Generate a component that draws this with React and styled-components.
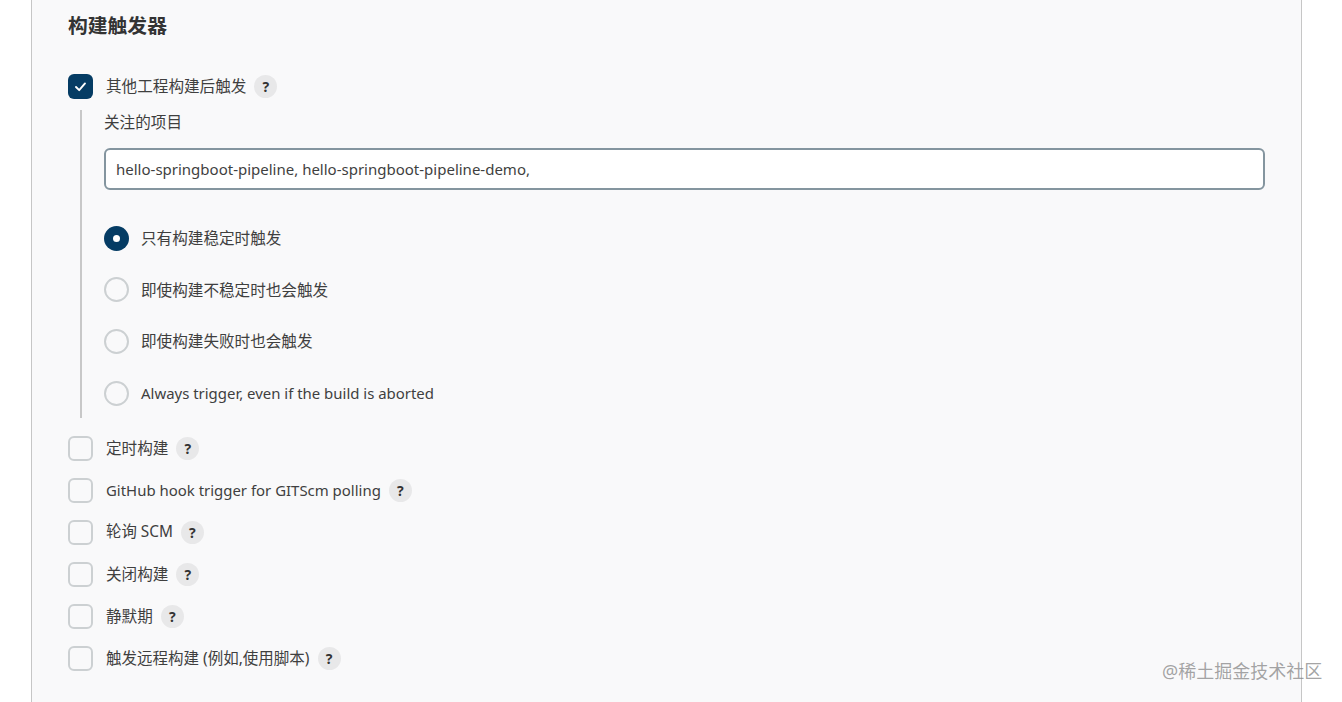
import React from "react";
import styled, { createGlobalStyle } from "styled-components";

const Global = createGlobalStyle`
  html, body { margin: 0; padding: 0; background: #fff; height: 702px; overflow: hidden; }
  body { font-family: "Noto Sans", "Noto Sans CJK SC", sans-serif; color: #333; }
`;

const Page = styled.div`
  height: 702px;
  padding: 0 40px 0 31px;
  box-sizing: border-box;
  position: relative;
  overflow: hidden;
`;

const Panel = styled.section`
  height: 702px;
  box-sizing: border-box;
  background: #f9f9fa;
  border-left: 1px solid #c6c6c6;
  border-right: 1px solid #c6c6c6;
  padding: 11px 36px 0 36px;
`;

const Title = styled.h2`
  margin: 0 0 24px;
  font-size: 19.8px;
  line-height: 30px;
  font-weight: 700;
  color: #333;
`;

const CheckRow = styled.div`
  display: flex;
  align-items: center;
  height: 42px;
`;

const Box = styled.span`
  width: 25px;
  height: 25px;
  box-sizing: border-box;
  flex: none;
  border-radius: 6px;
  display: flex;
  align-items: center;
  justify-content: center;
  background: ${(p) => (p.$on ? "#053c64" : "transparent")};
  border: ${(p) => (p.$on ? "none" : "2px solid #ccd0d2")};
`;

const Label = styled.span`
  margin-left: ${(p) => p.$gap || 13}px;
  font-size: ${(p) => p.$size || 15.6}px;
  line-height: 22px;
  color: #3f3f3f;
  white-space: nowrap;
`;

const Help = styled.span`
  margin-left: 8px;
  width: 23px;
  height: 23px;
  border-radius: 50%;
  background: #e8e8e9;
  color: #333;
  font-size: 14px;
  font-weight: 700;
  display: flex;
  align-items: center;
  justify-content: center;
  flex: none;
`;

const Nested = styled.div`
  margin: 3px 0 9px 12px;
  border-left: 2px solid #c8c8c8;
  padding-left: 22px;
  height: 308px;
  box-sizing: border-box;
`;

const FieldLabel = styled.div`
  font-size: 15.6px;
  line-height: 22px;
  color: #3f3f3f;
  margin-bottom: 15px;
  padding-top: 1px;
`;

const Input = styled.input`
  display: block;
  width: 1161px;
  height: 42px;
  box-sizing: border-box;
  border: 2px solid #84959f;
  border-radius: 6px;
  background: #fff;
  padding: 0 10px;
  font: 15px "Noto Sans", "Noto Sans CJK SC", sans-serif;
  color: #3f3f3f;
  outline: none;
`;

const RadioGroup = styled.div`
  display: flex;
  flex-direction: column;
  margin-top: 22.5px;
`;

const RadioRow = styled.div`
  display: flex;
  align-items: center;
  height: 51.6px;
`;

const Radio = styled.span`
  width: 25px;
  height: 25px;
  box-sizing: border-box;
  border-radius: 50%;
  flex: none;
  display: flex;
  align-items: center;
  justify-content: center;
  background: ${(p) => (p.$on ? "#053c64" : "transparent")};
  border: ${(p) => (p.$on ? "none" : "2px solid #ccd0d2")};
  &::after {
    content: "";
    display: ${(p) => (p.$on ? "block" : "none")};
    width: 7px;
    height: 7px;
    border-radius: 50%;
    background: #fff;
  }
`;

const Watermark = styled.div`
  position: absolute;
  left: 1162px;
  top: 659px;
  font-size: 18px;
  line-height: 24px;
  white-space: nowrap;
  color: rgba(125, 125, 125, 0.7);
`;

const Check = () => (
  <svg width="13" height="13" viewBox="0 0 13 13" fill="none">
    <path d="M2 7l3.2 3.2L11 3.4" stroke="#fff" strokeWidth="1.9" strokeLinecap="round" strokeLinejoin="round" />
  </svg>
);

const items = [
  { t: "定时构建" },
  { t: "GitHub hook trigger for GITScm polling", s: 14.95 },
  { t: "轮询 SCM", s: 15.4 },
  { t: "关闭构建" },
  { t: "静默期" },
  { t: "触发远程构建 (例如,使用脚本)", s: 15.5 },
];
const radios = [
  { t: "只有构建稳定时触发" },
  { t: "即使构建不稳定时也会触发" },
  { t: "即使构建失败时也会触发" },
  { t: "Always trigger, even if the build is aborted", s: 14.95 },
];

export default function App() {
  return (
    <Page>
      <Global />
      <Panel>
        <Title>构建触发器</Title>
        <CheckRow>
          <Box $on><Check /></Box>
          <Label>其他工程构建后触发</Label>
          <Help>?</Help>
        </CheckRow>
        <Nested>
          <FieldLabel>关注的项目</FieldLabel>
          <Input readOnly value="hello-springboot-pipeline, hello-springboot-pipeline-demo," />
          <RadioGroup>
            {radios.map((r, i) => (
              <RadioRow key={r.t}>
                <Radio $on={i === 0} />
                <Label $gap={12} $size={r.s}>{r.t}</Label>
              </RadioRow>
            ))}
          </RadioGroup>
        </Nested>
        {items.map((it) => (
          <CheckRow key={it.t}>
            <Box />
            <Label $size={it.s}>{it.t}</Label>
            <Help>?</Help>
          </CheckRow>
        ))}
      </Panel>
      <Watermark>@稀土掘金技术社区</Watermark>
    </Page>
  );
}
